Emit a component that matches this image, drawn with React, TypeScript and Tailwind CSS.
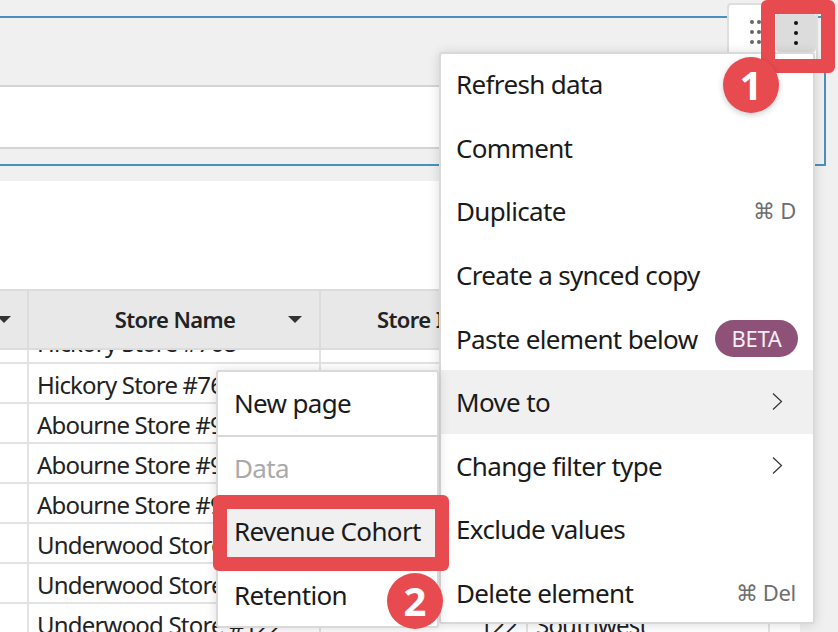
import React from "react";

const font = { fontFamily: '"Noto Sans", sans-serif' };

function Chevron() {
  return (
    <svg width="11" height="19" viewBox="0 0 11 19" fill="none" stroke="#333" strokeWidth="1.2" className="mr-[13px]">
      <path d="M1 1.5 L9.5 9.5 L1 17.5" />
    </svg>
  );
}

function Dot({ className }: { className: string }) {
  return <div className={`w-[4px] h-[4px] rounded-full ${className}`} />;
}

function MenuItem({ label, right, active }: { label: string; right?: React.ReactNode; active?: boolean }) {
  return (
    <div className={`h-[63.6px] flex items-center justify-between pl-[15px] pr-[17px] ${active ? "bg-[#f0f0f0]" : ""}`}>
      <span className="text-[26px] tracking-[-0.65px] text-[#1a1a1a] relative top-[1px]">{label}</span>
      {right}
    </div>
  );
}

const rows = [
  { name: "Hickory Store #768", id: "", region: "" },
  { name: "Abourne Store #901", id: "", region: "" },
  { name: "Abourne Store #902", id: "", region: "" },
  { name: "Abourne Store #903", id: "", region: "" },
  { name: "Underwood Store #120", id: "", region: "" },
  { name: "Underwood Store #121", id: "", region: "" },
  { name: "Underwood Store #122", id: "122", region: "Southwest" },
];

export default function App() {
  return (
    <div className="relative w-[838px] h-[632px] overflow-hidden bg-[#f0f0f0]" style={font}>
      {/* selected element frame */}
      <div className="absolute left-0 top-[16px] w-[826px] h-[150px] border-2 border-[#4a90bf] border-l-0 pt-[67px]">
        <div className="h-[64px] w-[800px] bg-white border-y-2 border-[#d4d4d4]" />
      </div>
      {/* table card */}
      <div className="absolute left-0 top-[181px] w-[800px] h-[451px] bg-white pt-[108px]">
        <div className="flex h-[61px] bg-[#e8e8e8] border-y-2 border-[#dcdcdc] text-[#222] text-[22px] font-semibold tracking-[-0.6px]">
          <div className="w-[29px] border-r-2 border-[#dcdcdc] flex items-center">
            <div className="w-0 h-0 border-x-[7px] border-x-transparent border-t-[7px] border-t-[#333] -ml-[3px]" />
          </div>
          <div className="w-[292px] border-r-2 border-[#dcdcdc] flex items-center relative justify-center pl-[2px]">
            Store Name
            <div className="absolute right-[17px] top-[25px] w-0 h-0 border-x-[7px] border-x-transparent border-t-[7px] border-t-[#333]" />
          </div>
          <div className="pl-[56px] flex items-center whitespace-nowrap">Store ID</div>
        </div>
        <div className="h-[14px] overflow-hidden flex border-b-2 border-[#e3e3e3]">
          <div className="w-[29px] border-r-2 border-[#e3e3e3]" />
          <div className="relative w-[292px] border-r-2 border-[#e3e3e3] pl-[8px] text-[24px] tracking-[-0.8px] text-[#222] leading-[14px] whitespace-nowrap">
            <span className="relative top-[-14px]">Hickory Store #768</span>
          </div>
        </div>
        {rows.map((r, i) => (
          <div key={i} className="h-[40px] flex border-b-2 border-[#e3e3e3] text-[24px] tracking-[-0.8px] text-[#222] whitespace-nowrap">
            <div className="w-[29px] border-r-2 border-[#e3e3e3]" />
            <div className="w-[292px] border-r-2 border-[#e3e3e3] pl-[8px] pt-[3px] flex items-center">{r.name}</div>
            <div className="w-[207px] border-r-2 border-[#e3e3e3] pr-[8px] pt-[3px] flex items-center justify-end">{r.id}</div>
            <div className="w-[242px] border-r-2 border-[#e3e3e3] pl-[8px] pt-[3px] flex items-center">{r.region}</div>
          </div>
        ))}
      </div>
      {/* toolbar */}
      <div className="absolute left-[727px] top-[3px] w-[91px] h-[60px] bg-white border-2 border-[#dedede] rounded-[4px] flex items-start pl-[21px]">
        <div className="grid grid-cols-2 w-[11px] gap-x-[3px] gap-y-[6px] mt-[15px]">
          {[0, 1, 2, 3, 4, 5].map((i) => (
            <Dot key={i} className="bg-[#666]" />
          ))}
        </div>
        <div className="ml-[15px] mt-[8px] w-[40px] h-[39px] bg-[#dcdcdc] rounded-[4px] flex flex-col items-center justify-center gap-[6px]">
          <Dot className="bg-[#111]" />
          <Dot className="bg-[#111]" />
          <Dot className="bg-[#111]" />
        </div>
      </div>
      {/* main menu */}
      <div className="absolute left-[439px] top-[52px] w-[376px] h-[572px] bg-white border-2 border-[#d9d9d9] rounded-[3px] shadow-[0_1px_12px_rgba(0,0,0,0.14)]">
        <div className="-mt-[2px]">
          <MenuItem label="Refresh data" />
          <MenuItem label="Comment" />
          <MenuItem label="Duplicate" right={<span className="text-[22px] tracking-[-0.3px] text-[#6e6e6e]">⌘ D</span>} />
          <MenuItem label="Create a synced copy" />
          <MenuItem
            label="Paste element below"
            right={<span className="h-[37px] w-[83px] -mr-[2px] rounded-full bg-[#8e5279] text-[#f5eef3] text-[22px] tracking-[-0.3px] flex items-center justify-center">BETA</span>}
          />
          <MenuItem label="Move to" active right={<Chevron />} />
          <MenuItem label="Change filter type" right={<Chevron />} />
          <MenuItem label="Exclude values" />
          <MenuItem label="Delete element" right={<span className="text-[22px] tracking-[-0.3px] text-[#6e6e6e]">⌘ Del</span>} />
        </div>
      </div>
      {/* sub menu */}
      <div className="absolute left-[216px] top-[370px] w-[223px] h-[258px] bg-white border-2 border-[#d9d9d9] rounded-[3px] shadow-[0_1px_12px_rgba(0,0,0,0.14)] text-[26px] tracking-[-0.65px] text-[#1a1a1a]">
        <div className="h-[65px] flex items-center pl-[16px] border-b-2 border-[#d9d9d9]">New page</div>
        <div className="h-[63px] flex items-center pl-[16px] text-[#aaa]">Data</div>
        <div className="h-[63px] flex items-center pl-[16px] bg-[#f0f0f0]">Revenue Cohort</div>
        <div className="h-[64px] flex items-center pl-[16px]">Retention</div>
      </div>
      {/* annotations */}
      <div className="absolute left-[761px] top-0 w-[74px] h-[73px] border-[14px] border-[#e74b4f] rounded-[6px]" />
      <div className="absolute left-[723px] top-[57px] w-[56px] h-[56px] rounded-full bg-[#e74b4f] text-white text-[40px] font-bold flex items-center justify-center shadow-[0_2px_6px_rgba(0,0,0,0.2)]">1</div>
      <div className="absolute left-[213px] top-[495px] w-[236px] h-[76px] border-[14px] border-[#e74b4f] rounded-[6px]" />
      <div className="absolute left-[387px] top-[573px] w-[56px] h-[56px] rounded-full bg-[#e74b4f] text-white text-[40px] font-bold flex items-center justify-center">2</div>
    </div>
  );
}
